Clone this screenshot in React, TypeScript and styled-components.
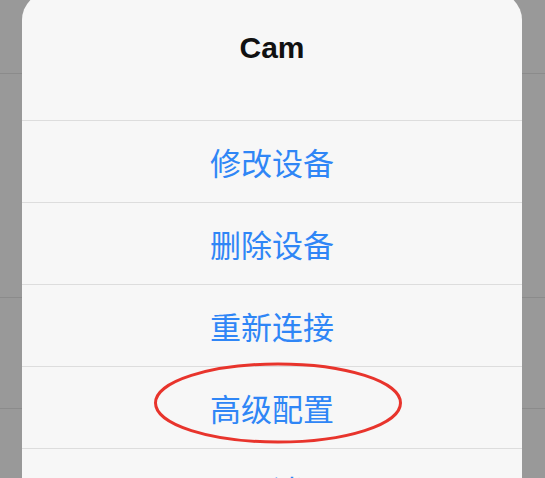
import { FC } from 'react';
import styled, { createGlobalStyle } from 'styled-components';

const GlobalStyle = createGlobalStyle`
  html, body {
    margin: 0;
    padding: 0;
    background: #999999;
    overflow: hidden;
  }
  #root {
    width: 545px;
    height: 478px;
  }
`;

type Action = {
  label: string;
  highlight?: boolean;
};

const ACTIONS: Action[] = [
  { label: '修改设备' },
  { label: '删除设备' },
  { label: '重新连接' },
  { label: '高级配置', highlight: true },
  { label: '取消' },
];

// dimmed list lines behind the sheet
const BACKDROP_ROWS = [74, 224, 111];

export const ActionSheet: FC = () => {
  return <Sheet>
    <Title>Cam</Title>
    {ACTIONS.map((action) => (
      <ActionRow key={action.label}>
        {action.label}
        {action.highlight && (
          <Mark width="250" height="84" viewBox="0 0 250 84">
            <ellipse cx="125" cy="42" rx="122.5" ry="39" fill="none" stroke="#e8342c" strokeWidth="3" />
          </Mark>
        )}
      </ActionRow>
    ))}
  </Sheet>;
};

export default function App() {
  return <>
    <GlobalStyle />
    <Screen>
      <Backdrop>
        {BACKDROP_ROWS.map((h, i) => <BackdropRow key={i} $height={h} />)}
      </Backdrop>
      <ActionSheet />
    </Screen>
  </>;
}

const Screen = styled.div`
  position: relative;
  width: 545px;
  height: 478px;
  overflow: hidden;
  background: #999999;
`;

const Backdrop = styled.div`
  display: flex;
  flex-direction: column;
`;

const BackdropRow = styled.div<{ $height: number }>`
  height: ${(p) => p.$height - 1}px;
  border-bottom: 1px solid #8b8b8b;
`;

const Sheet = styled.div`
  position: absolute;
  left: 22px;
  top: -8px;
  width: 500px;
  background: #f7f7f7;
  border-radius: 28px 28px 0 0;
  display: flex;
  flex-direction: column;
`;

const Title = styled.div`
  height: 112px;
  padding-bottom: 16px;
  display: flex;
  align-items: center;
  justify-content: center;
  font-family: "Liberation Sans", Arial, sans-serif;
  font-weight: bold;
  font-size: 30px;
  color: #111111;
`;

const ActionRow = styled.div`
  position: relative;
  height: 81px;
  border-top: 1px solid #dddddd;
  display: flex;
  align-items: center;
  justify-content: center;
  font-family: "Noto Sans CJK SC", "Noto Sans", sans-serif;
  font-size: 31px;
  color: #2f86f6;
`;

const Mark = styled.svg`
  position: absolute;
  left: 131px;
  top: -6px;
`;
